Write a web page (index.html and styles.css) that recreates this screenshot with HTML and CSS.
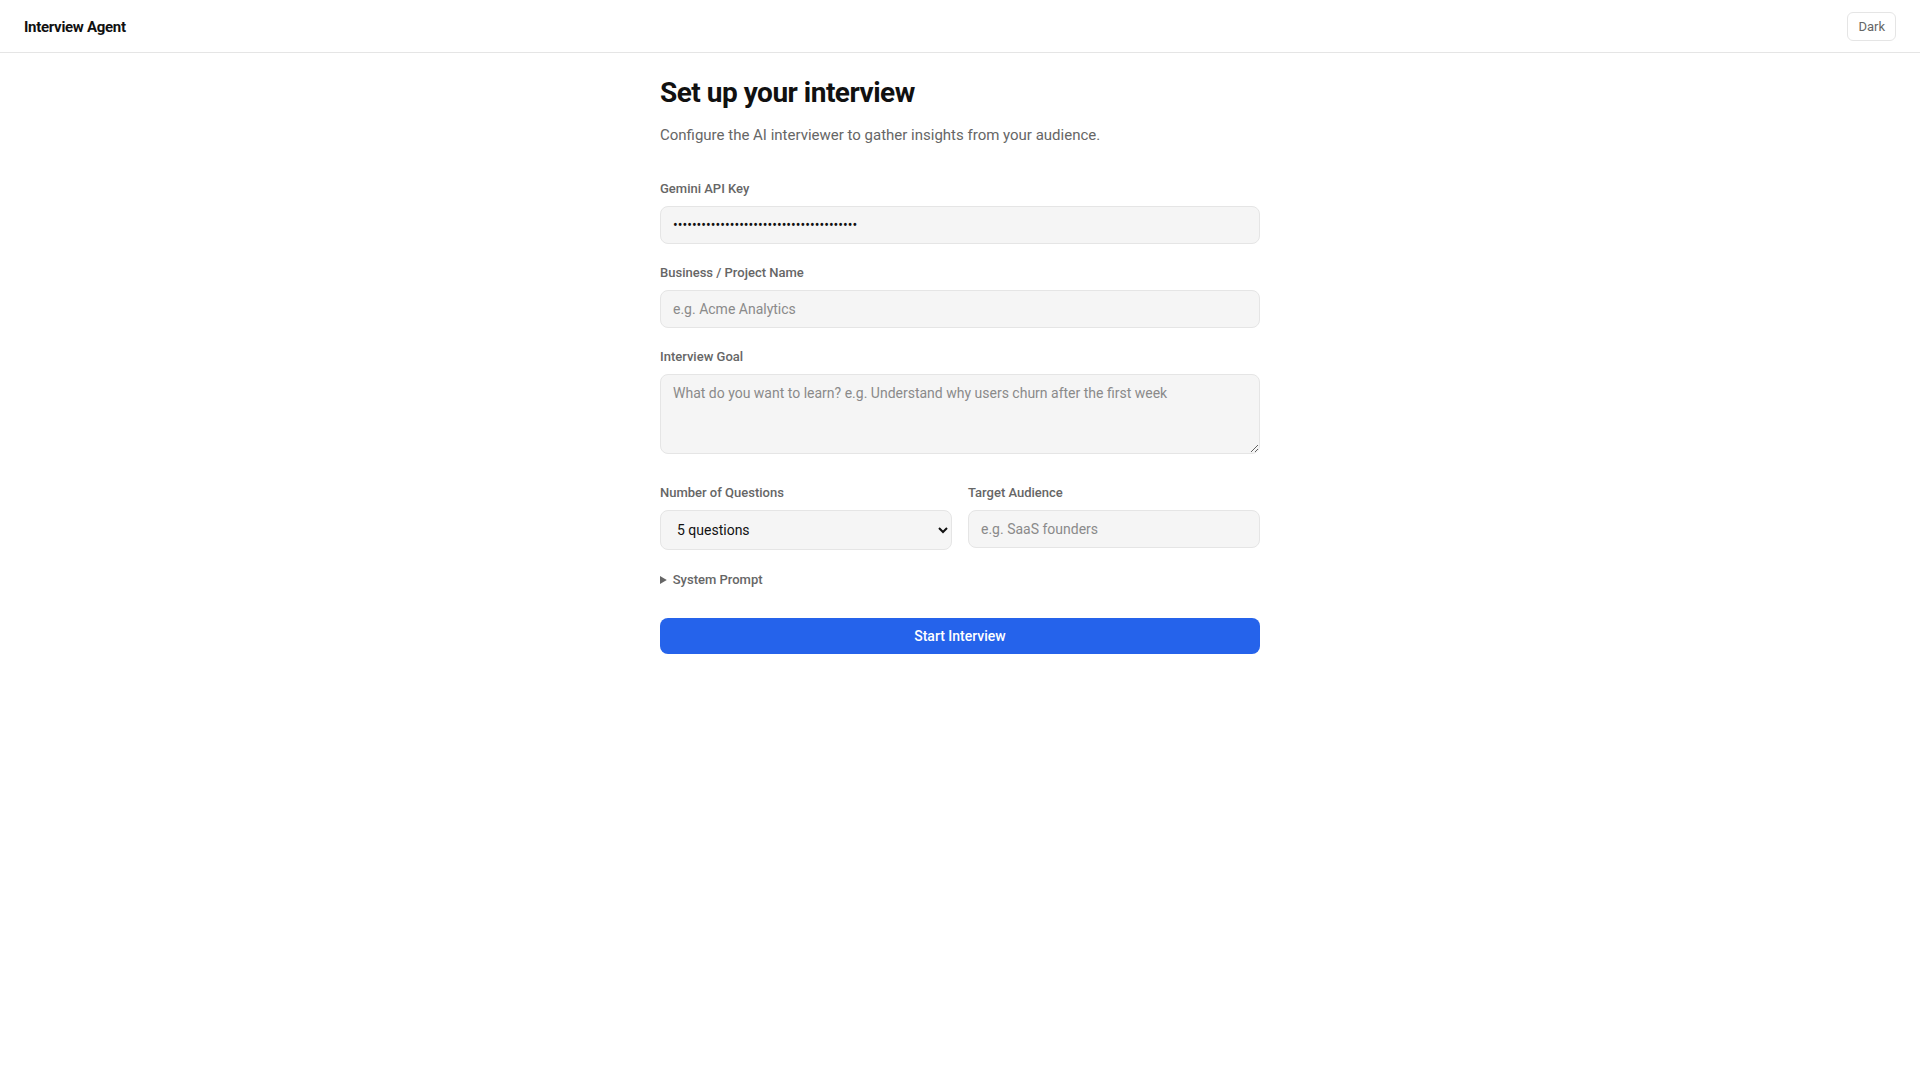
FILE: index.html
```html
<!DOCTYPE html>
<html lang="en">
<head>
<meta charset="utf-8">
<title>Interview Agent</title>
<link rel="stylesheet" href="styles.css">
</head>
<body>
<header class="topbar">
  <div class="brand">Interview Agent</div>
  <button class="theme-btn" type="button">Dark</button>
</header>
<main class="page">
  <h1 class="title">Set up your interview</h1>
  <p class="subtitle">Configure the AI interviewer to gather insights from your audience.</p>
  <form class="form">
    <div class="field">
      <label class="label" for="key">Gemini API Key</label>
      <input class="input" id="key" type="password" value="AIzaSyD4x9Kq2LmN7pQrStUvWxYz0123456789a">
    </div>
    <div class="field">
      <label class="label" for="biz">Business / Project Name</label>
      <input class="input" id="biz" type="text" placeholder="e.g. Acme Analytics">
    </div>
    <div class="field field-goal">
      <label class="label" for="goal">Interview Goal</label>
      <textarea class="input textarea" id="goal" placeholder="What do you want to learn? e.g. Understand why users churn after the first week"></textarea>
    </div>
    <div class="row">
      <div class="field">
        <label class="label" for="num">Number of Questions</label>
        <select class="input select" id="num">
          <option>3 questions</option>
          <option selected>5 questions</option>
          <option>7 questions</option>
          <option>10 questions</option>
        </select>
      </div>
      <div class="field">
        <label class="label" for="aud">Target Audience</label>
        <input class="input" id="aud" type="text" placeholder="e.g. SaaS founders">
      </div>
    </div>
    <details class="prompt">
      <summary>System Prompt</summary>
    </details>
    <button class="start-btn" type="button">Start Interview</button>
  </form>
</main>
</body>
</html>
```

FILE: styles.css
```css
* { box-sizing: border-box; }

html, body {
  margin: 0;
  padding: 0;
  background: #ffffff;
  color: #111111;
  font-family: Roboto, "Liberation Sans", Arial, sans-serif;
}

.topbar {
  display: flex;
  align-items: center;
  justify-content: space-between;
  height: 53px;
  padding: 1px 24px 0;
  border-bottom: 1px solid #e5e5e5;
}

.brand {
  font-size: 15px;
  font-weight: 700;
  color: #111111;
  letter-spacing: -0.3px;
}

.theme-btn {
  font-family: inherit;
  font-size: 13px;
  color: #666666;
  background: #ffffff;
  border: 1px solid #e5e5e5;
  border-radius: 6px;
  height: 29px;
  padding: 0 10px;
  cursor: pointer;
}

.page {
  max-width: 600px;
  margin: 0 auto;
  padding: 25px 0 40px;
}

.title {
  margin: 0 0 15px;
  font-size: 28px;
  line-height: 1.1;
  font-weight: 700;
  color: #111111;
  letter-spacing: -0.5px;
}

.subtitle {
  margin: 0 0 34px;
  font-size: 15px;
  line-height: 1.5;
  color: #666666;
}

.form {
  display: flex;
  flex-direction: column;
}

.field {
  display: flex;
  flex-direction: column;
  margin-bottom: 20px;
}

.field-goal {
  margin-bottom: 30px;
}

.label {
  font-size: 13px;
  line-height: 18px;
  font-weight: 500;
  color: #666666;
  margin-bottom: 8px;
}

.input {
  display: block;
  width: 100%;
  height: 38px;
  padding: 0 12px;
  font-family: inherit;
  font-size: 14px;
  color: #111111;
  background: #f5f5f5;
  border: 1px solid #e5e5e5;
  border-radius: 8px;
  outline: none;
}

.input::placeholder {
  color: #8a8a8a;
}

.textarea {
  height: 80px;
  padding: 10px 12px;
  line-height: 1.2;
  resize: vertical;
}

.select {
  height: 40px;
  padding: 0 8px 0 12px;
  color: #111111;
}

.row {
  display: grid;
  grid-template-columns: 1fr 1fr;
  column-gap: 16px;
  align-items: start;
}

.row .field {
  margin-bottom: 21px;
}

.prompt {
  margin-bottom: 29px;
}

.prompt summary {
  font-size: 13px;
  line-height: 18px;
  font-weight: 500;
  color: #666666;
  cursor: pointer;
}

.prompt summary::marker {
  font-size: 12px;
  color: #666666;
}

.start-btn {
  width: 100%;
  height: 36px;
  font-family: inherit;
  font-size: 14px;
  font-weight: 500;
  color: #ffffff;
  background: #2563eb;
  border: none;
  border-radius: 8px;
  cursor: pointer;
}
```
